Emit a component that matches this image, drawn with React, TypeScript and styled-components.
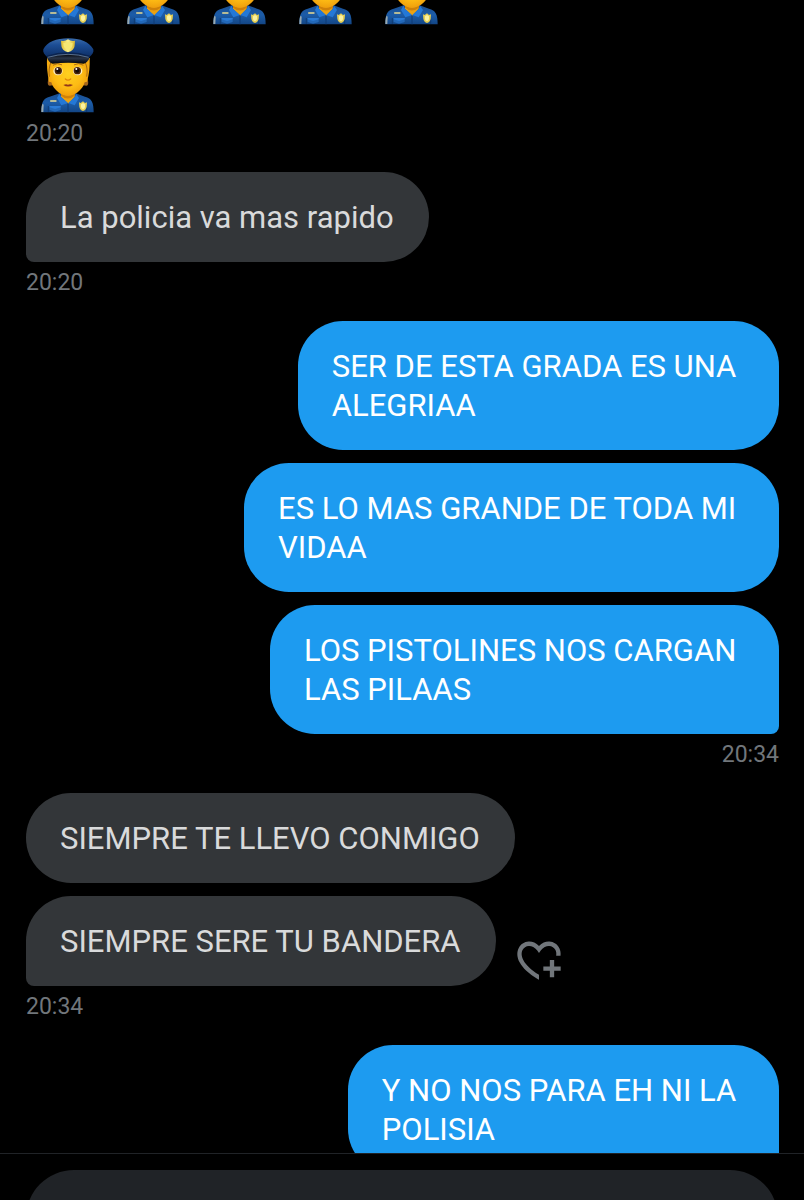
import styled, { createGlobalStyle, css } from "styled-components";

const color = {
    sent: "#1d9bf0",
    received: "#333639",
    receivedText: "#d9dadb",
    muted: "#71767b",
    field: "#202327",
}

type Message = {
    text: string
    canReact?: boolean
}

type MessageGroup = {
    sent?: boolean
    time?: string
    messages: Message[]
}

const listGroup: MessageGroup[] = [{
    time: "20:20",
    messages: [{ text: "La policia va mas rapido" }]
}, {
    sent: true,
    time: "20:34",
    messages: [
        { text: "SER DE ESTA GRADA ES UNA \nALEGRIAA" },
        { text: "ES LO MAS GRANDE DE TODA MI \nVIDAA" },
        { text: "LOS PISTOLINES NOS CARGAN \nLAS PILAAS" }
    ]
}, {
    time: "20:34",
    messages: [
        { text: "SIEMPRE TE LLEVO CONMIGO" },
        { text: "SIEMPRE SERE TU BANDERA", canReact: true }
    ]
}, {
    sent: true,
    messages: [{ text: "Y NO NOS PARA EH NI LA \nPOLISIA" }]
}]

// 5 in the first line, 1 wrapped
const listOfficer = [0, 1, 2, 3, 4, 5]

const OfficerSymbol = () => (
    <Sprite aria-hidden="true">
        <defs>
            <radialGradient id="skin" cx="0.5" cy="0.4" r="0.65">
                <stop offset="0" stopColor="#ffd01f" />
                <stop offset="0.6" stopColor="#fdbb14" />
                <stop offset="1" stopColor="#ec990b" />
            </radialGradient>
            <linearGradient id="shirt" x1="0" y1="0" x2="0" y2="1">
                <stop offset="0" stopColor="#1a4f92" />
                <stop offset="0.5" stopColor="#1c5ca8" />
                <stop offset="1" stopColor="#134584" />
            </linearGradient>
            <linearGradient id="cap" x1="0" y1="0" x2="0" y2="1">
                <stop offset="0" stopColor="#3a6cab" />
                <stop offset="0.35" stopColor="#1c4d94" />
                <stop offset="1" stopColor="#0c2c62" />
            </linearGradient>
            <linearGradient id="visor" x1="0" y1="0" x2="0" y2="1">
                <stop offset="0" stopColor="#05080f" />
                <stop offset="0.4" stopColor="#2b3547" />
                <stop offset="1" stopColor="#04060b" />
            </linearGradient>
            <linearGradient id="badge" x1="0" y1="0" x2="1" y2="0">
                <stop offset="0" stopColor="#e0bd2f" />
                <stop offset="0.5" stopColor="#f8ee8d" />
                <stop offset="1" stopColor="#d9b62c" />
            </linearGradient>
        </defs>
        <symbol id="officer" viewBox="0 0 162 225">
            <path d="M1 223C1 194 6 180 26 176L56 166H104L132 176C152 180 158 194 158 223Z" fill="url(#shirt)" />
            <path d="M22 222V204M137 222V208" stroke="#0e3467" strokeWidth="2" />
            <path d="M1 220C1 208 2 202 5 197L8 200L7 222H1Z" fill="#9aaab0" />
            <path d="M60 160H101V176L82 197L60 177Z" fill="#eda20f" />
            <path d="M60 166Q81 180 101 166V173Q81 190 60 173Z" fill="#cf8109" />
            <path d="M55 167L48 180L61 202L81 195L60 176Z" fill="#2478d6" />
            <path d="M105 167L114 180L101 202L82 195L102 176Z" fill="#2478d6" />
            <path d="M81 196V223" stroke="#0f3b75" strokeWidth="3" />
            <path d="M26 204H59V216L42 221L26 216Z" fill="#2368b8" />
            <path d="M26 204H59V208L42 213L26 208Z" fill="#2b7bd6" />
            <rect x="27" y="187" width="20" height="4" rx="2" fill="#e9dc93" />
            <path d="M126 190L119 195L114 193L115 206C116 213 120 217 126 219C132 217 136 213 137 206L138 193L132 195Z" fill="#e5ce54" />
            <path d="M126 195L120 199V207Q121 212 126 214Q131 212 132 207V199Z" fill="#faf2a0" />

            <path d="M23 120C19 132 19 143 26 143L39 141L36 112Z" fill="#a5661b" />
            <path d="M139 120C143 132 143 143 136 143L123 141L126 112Z" fill="#a5661b" />
            <path d="M18 60C17 82 19 108 24 131L38 134V60Z" fill="#f5aa10" />
            <path d="M146 60C147 82 145 108 138 131L124 134V60Z" fill="#f5aa10" />
            <path d="M28 62H134C136 90 135 114 131 132C128 146 120 154 110 163C101 170 92 173 81 173C70 173 61 170 52 163C42 154 34 146 31 132C27 114 26 90 28 62Z" fill="url(#skin)" />
            <path d="M31 70C24 84 23 102 25 116" fill="none" stroke="#a96a12" strokeWidth="3" />
            <path d="M131 70C139 84 140 102 137 116" fill="none" stroke="#a96a12" strokeWidth="3" />
            <path d="M37 81Q49 73 62 80M100 80Q113 73 126 81" fill="none" stroke="#b26f14" strokeWidth="3" strokeLinecap="round" />
            <ellipse cx="51" cy="99" rx="14" ry="13" fill="#fff2c5" />
            <ellipse cx="110" cy="99" rx="14" ry="13" fill="#fff2c5" />
            <circle cx="52" cy="98" r="11" fill="#492309" />
            <circle cx="109" cy="98" r="11" fill="#492309" />
            <circle cx="52" cy="98" r="6" fill="#150b07" />
            <circle cx="109" cy="98" r="6" fill="#150b07" />
            <circle cx="49" cy="93" r="3" fill="#fff" />
            <circle cx="106" cy="93" r="3" fill="#fff" />
            <path d="M73 123Q81 130 89 123" fill="none" stroke="#e0860b" strokeWidth="4" strokeLinecap="round" />
            <path d="M67 141Q75 137 81 140Q87 137 96 141Q81 150 67 141Z" fill="#91371a" />

            <path d="M7 34C18 12 46 1 82 1S145 12 157 34C159 43 154 50 143 59Q81 43 21 59C10 50 5 43 7 34Z" fill="url(#cap)" />
            <path d="M17 53Q81 33 147 53L142 67Q81 52 21 67Z" fill="#0b2450" />
            <path d="M20 60Q81 39 143 60C142 70 136 75 128 77Q81 72 35 77C27 75 22 70 20 60Z" fill="url(#visor)" />
            <path d="M20 58Q81 40 143 58" fill="none" stroke="#8397ab" strokeWidth="2" />
            <path d="M81 4Q71 12 60 8L61 22C62 34 69 39 81 43C93 39 100 34 101 22L102 8Q91 12 81 4Z" fill="url(#badge)" />
            <path d="M81 11Q75 16 67 15L68 23Q70 32 81 36Q92 32 94 23L95 15Q87 16 81 11Z" fill="#f5e773" />
        </symbol>
    </Sprite>
)

const HeartPlus = () => (
    <svg viewBox="0 0 24 24" width="52" height="52" fill="currentColor" aria-hidden="true">
        <path d="M17 12v3h-2.998v2h3v3h2v-3h3v-2h-3.001v-3H17zm-5 6.839c-3.871-2.34-6.053-4.639-7.127-6.609-1.112-2.04-1.031-3.7-.479-4.82.561-1.13 1.667-1.84 2.91-1.91 1.222-.06 2.68.51 3.892 2.16l.806 1.09.805-1.09c1.211-1.65 2.668-2.22 3.89-2.16 1.242.07 2.347.78 2.908 1.91.334.677.49 1.554.321 2.59h2.011c.153-1.283-.039-2.469-.539-3.48-.887-1.79-2.647-2.91-4.601-3.01-1.65-.09-3.367.56-4.796 2.01-1.43-1.45-3.147-2.1-4.798-2.01-1.954.1-3.714 1.22-4.601 3.01-.896 1.81-.846 4.17.514 6.67 1.353 2.48 4.003 5.12 8.382 7.67l.502.299v-2.32z" />
    </svg>
)

const App = () => {
    return (
        <Screen>
            <GlobalStyle />
            <OfficerSymbol />
            <Viewport>
                <Thread>
                    <Group>
                        <EmojiMessage>
                            {listOfficer.map((item) => <Officer key={item} role="img" aria-label="police officer">
                                <use href="#officer" />
                            </Officer>)}
                        </EmojiMessage>
                        <Time>20:20</Time>
                    </Group>
                    {listGroup.map((group, index) => <Group key={index} $sent={group.sent}>
                        <Bubbles $sent={group.sent}>
                            {group.messages.map((item, i) => <MessageRow key={i}>
                                <Bubble $sent={group.sent} $tail={i === group.messages.length - 1}>{item.text}</Bubble>
                                {item.canReact && <ReactButton type="button" aria-label="Add reaction">
                                    <HeartPlus />
                                </ReactButton>}
                            </MessageRow>)}
                        </Bubbles>
                        {group.time && <Time>{group.time}</Time>}
                    </Group>)}
                </Thread>
            </Viewport>
            <Composer>
                <Field type="text" aria-label="Message" />
            </Composer>
        </Screen>
    )
}

export default App

const GlobalStyle = createGlobalStyle`
    * {
        box-sizing: border-box;
    }
    body {
        margin: 0;
        background: #000;
        font-family: Roboto, "Liberation Sans", sans-serif;
    }
`

const Screen = styled.main`
    height: 100vh;
    display: flex;
    flex-direction: column;
    overflow: hidden;
    background: #000;
`

const Sprite = styled.svg`
    position: absolute;
    width: 0;
    height: 0;
`

const Viewport = styled.div`
    flex: 1;
    min-height: 0;
    display: flex;
    flex-direction: column;
    justify-content: flex-end;
    overflow: hidden;
`

// the last bubble runs under the composer
const Thread = styled.div`
    flex: none;
    display: flex;
    flex-direction: column;
    gap: 18px;
    padding: 0 25px 0 26px;
    margin-bottom: -21px;
`

const Group = styled.section<{ $sent?: boolean }>`
    display: flex;
    flex-direction: column;
    align-items: ${({ $sent }) => $sent ? "flex-end" : "flex-start"};
`

const Bubbles = styled.div<{ $sent?: boolean }>`
    display: flex;
    flex-direction: column;
    align-items: ${({ $sent }) => $sent ? "flex-end" : "flex-start"};
    gap: 13px;
`

const MessageRow = styled.div`
    display: flex;
    align-items: flex-end;
    gap: 17px;
`

const Bubble = styled.div<{ $sent?: boolean, $tail?: boolean }>`
    padding: 26px 35px 25px 34px;
    border-radius: 45px;
    background: ${color.received};
    color: ${color.receivedText};
    font-size: 31px;
    line-height: 39px;
    white-space: pre;
    ${({ $tail }) => $tail && css`
        border-bottom-left-radius: 8px;
    `}
    ${({ $sent, $tail }) => $sent && css`
        background: ${color.sent};
        color: #fff;
        border-bottom-left-radius: 45px;
        border-bottom-right-radius: ${$tail ? "8px" : "45px"};
    `}
`

const EmojiMessage = styled.div`
    display: grid;
    grid-template-columns: repeat(5, 54px);
    gap: 13px 32px;
    padding-left: 15px;
`

const Officer = styled.svg`
    display: block;
    width: 54px;
    height: 75px;
`

const Time = styled.time`
    color: ${color.muted};
    font-size: 23px;
    line-height: 41px;
`

const ReactButton = styled.button`
    display: flex;
    padding: 0;
    border: 0;
    background: none;
    color: ${color.muted};
    cursor: pointer;
`

const Composer = styled.footer`
    flex: none;
    height: 47px;
    padding: 16px 26px 0;
    border-top: 1px solid ${color.field};
    overflow: hidden;
`

const Field = styled.input`
    display: block;
    width: 100%;
    height: 96px;
    padding: 0 34px;
    border: 0;
    border-radius: 48px;
    outline: none;
    background: ${color.field};
    color: ${color.receivedText};
    font: inherit;
    font-size: 31px;
`
